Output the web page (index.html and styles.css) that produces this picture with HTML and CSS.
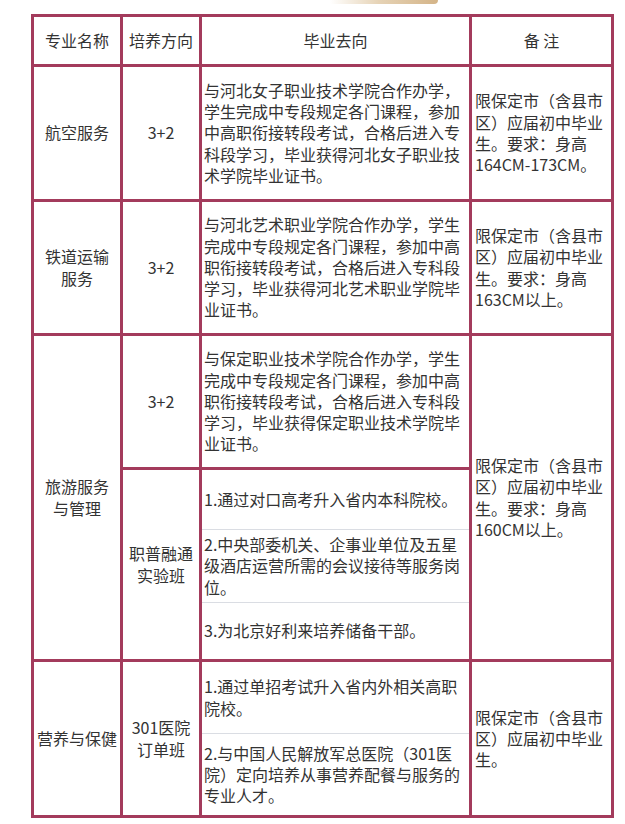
FILE: index.html
```html
<!DOCTYPE html>
<html lang="zh-CN">
<head>
<meta charset="utf-8">
<title>专业设置</title>
<link rel="stylesheet" href="styles.css">
</head>
<body>
<div class="page">
  <div class="deco"></div>
  <div class="grid">
    <div class="cell head">专业名称</div>
    <div class="cell head">培养方向</div>
    <div class="cell head">毕业去向</div>
    <div class="cell head">备 注</div>

    <div class="cell"><span>航空服务</span></div>
    <div class="cell">3+2</div>
    <div class="cell text">与河北女子职业技术学院合作办学，学生完成中专段规定各门课程，参加中高职衔接转段考试，合格后进入专科段学习，毕业获得河北女子职业技术学院毕业证书。</div>
    <div class="cell note">限保定市（含县市区）应届初中毕业生。要求：身高164CM-173CM。</div>

    <div class="cell"><span class="w4">铁道运输服务</span></div>
    <div class="cell">3+2</div>
    <div class="cell text">与河北艺术职业学院合作办学，学生完成中专段规定各门课程，参加中高职衔接转段考试，合格后进入专科段学习，毕业获得河北艺术职业学院毕业证书。</div>
    <div class="cell note">限保定市（含县市区）应届初中毕业生。要求：身高163CM以上。</div>

    <div class="cell span2"><span class="w4">旅游服务与管理</span></div>
    <div class="cell">3+2</div>
    <div class="cell text">与保定职业技术学院合作办学，学生完成中专段规定各门课程，参加中高职衔接转段考试，合格后进入专科段学习，毕业获得保定职业技术学院毕业证书。</div>
    <div class="cell note span2">限保定市（含县市区）应届初中毕业生。要求：身高160CM以上。</div>
    <div class="cell"><span class="w4">职普融通实验班</span></div>
    <div class="sublist">
      <div class="sub h59">1.通过对口高考升入省内本科院校。</div>
      <div class="sub h73">2.中央部委机关、企事业单位及五星级酒店运营所需的会议接待等服务岗位。</div>
      <div class="sub h57">3.为北京好利来培养储备干部。</div>
    </div>

    <div class="cell"><span>营养与保健</span></div>
    <div class="cell"><span class="w4">301医院订单班</span></div>
    <div class="sublist">
      <div class="sub h71">1.通过单招考试升入省内外相关高职院校。</div>
      <div class="sub h82">2.与中国人民解放军总医院（301医院）定向培养从事营养配餐与服务的专业人才。</div>
    </div>
    <div class="cell note">限保定市（含县市区）应届初中毕业生。</div>
  </div>
</div>
</body>
</html>
```

FILE: styles.css
```css
html, body {
  margin: 0;
  padding: 0;
  background: #ffffff;
}

body {
  font-family: "Noto Sans CJK SC", "Microsoft YaHei", sans-serif;
  font-size: 16px;
  line-height: 21.33px;
  color: #333333;
}

.page {
  padding-left: 31px;
}

.deco {
  margin-left: 299px;
  width: 108px;
  height: 4px;
  background: linear-gradient(90deg, rgba(236, 222, 200, 0) 0%, #e6d3b6 45%, #d4b488 100%);
  border-bottom-right-radius: 5px;
}

.grid {
  margin-top: 10px;
  box-sizing: border-box;
  width: 583px;
  display: grid;
  grid-template-columns: 86px 76px 267px 139px;
  grid-template-rows: 47px 132px 131px 131px 189px 153px;
  gap: 3px;
  padding: 3px;
  background: #a33b5c;
}

.cell {
  background: #ffffff;
  display: flex;
  align-items: center;
  justify-content: center;
  text-align: center;
}

.w4 {
  display: block;
  max-width: 64px;
}

.cell.text,
.cell.note {
  justify-content: flex-start;
  text-align: left;
  padding: 0 4px 0 2px;
}

.cell.note {
  padding: 0 2px 0 3px;
}

.span2 {
  grid-row: span 2;
}

.sublist {
  background: #ffffff;
  display: flex;
  flex-direction: column;
}

.sub {
  box-sizing: border-box;
  display: flex;
  align-items: center;
  padding: 0 4px 0 2px;
}

.sub + .sub {
  border-top: 1px solid #dadde3;
}

.h59 { height: 59px; }
.h73 { height: 73px; }
.h57 { height: 57px; }
.h71 { height: 71px; }
.h82 { height: 82px; }
```
